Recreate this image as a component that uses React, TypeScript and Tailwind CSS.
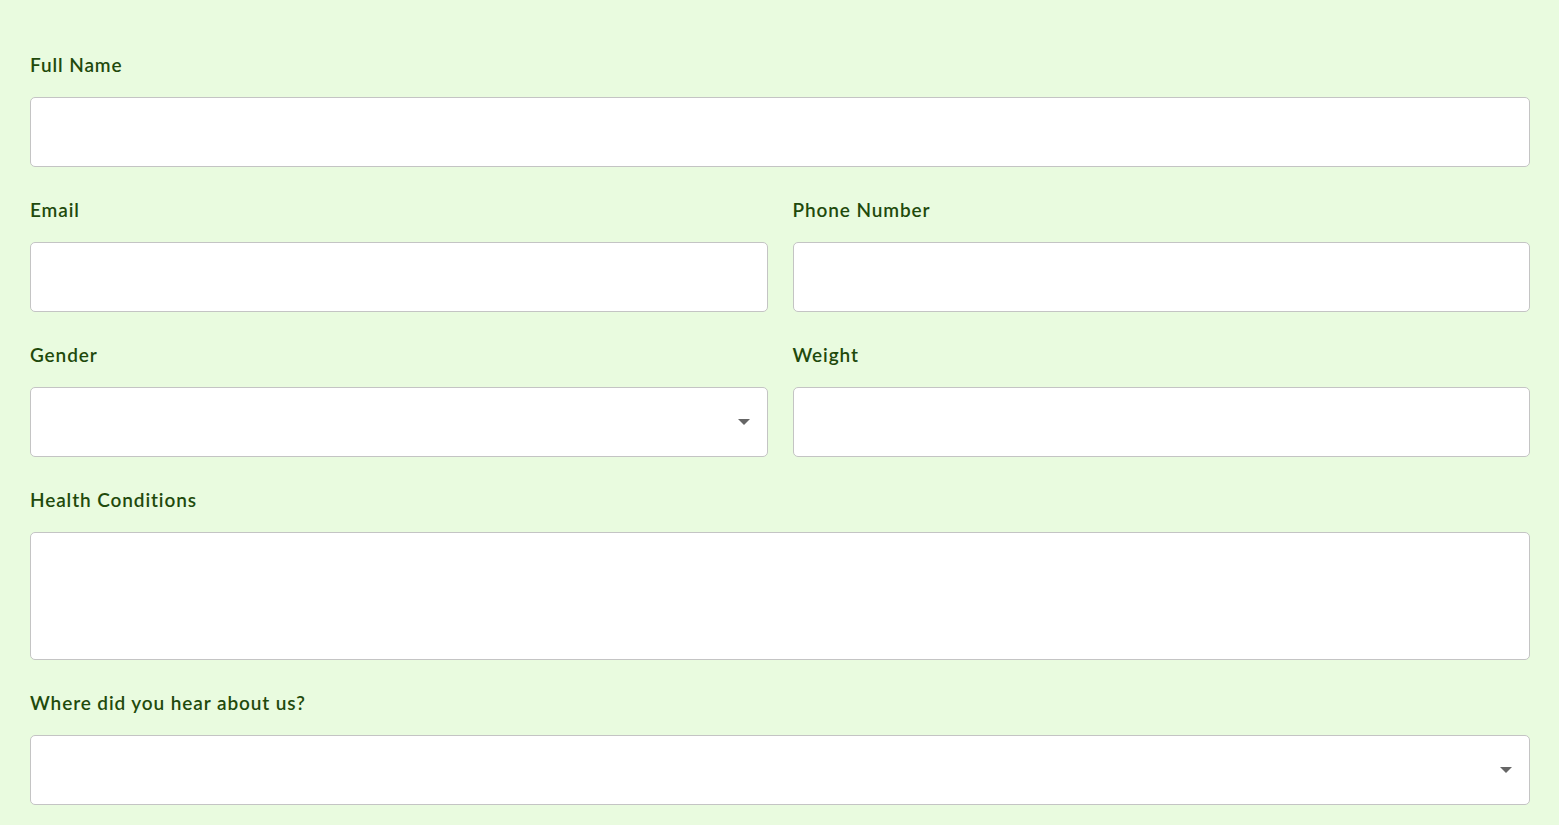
import React from 'react';

const labelCls =
  'block text-[19px] leading-[22px] font-semibold tracking-[0.9px] text-[#1f4a0c] mb-[21px]';
const boxCls =
  'block w-full h-[70px] rounded-[5px] border border-[#c4c4c4] bg-white outline-none';

function Field({ label, children }: { label: string; children: React.ReactNode }) {
  return (
    <div className="min-w-0">
      <label className={labelCls}>{label}</label>
      {children}
    </div>
  );
}

function Select() {
  return (
    <div className="relative">
      <div className={boxCls} />
      <svg
        className="absolute right-[18px] top-1/2 -translate-y-1/2"
        width="12"
        height="6"
        viewBox="0 0 12 6"
      >
        <path d="M0 0 L12 0 L6 6 Z" fill="#666" />
      </svg>
    </div>
  );
}

export default function App() {
  return (
    <div
      className="min-h-screen bg-[#e9fbdf] pl-[30px] pr-[29px] pt-[54px] pb-[20px]"
      style={{ fontFamily: 'Lato, "Noto Sans", sans-serif' }}
    >
      <div className="flex flex-col gap-[32px]">
        <Field label="Full Name">
          <div className={boxCls} />
        </Field>
        <div className="grid grid-cols-2 gap-[25px]">
          <Field label="Email">
            <div className={boxCls} />
          </Field>
          <Field label="Phone Number">
            <div className={boxCls} />
          </Field>
        </div>
        <div className="grid grid-cols-2 gap-[25px]">
          <Field label="Gender">
            <Select />
          </Field>
          <Field label="Weight">
            <div className={boxCls} />
          </Field>
        </div>
        <Field label="Health Conditions">
          <div className={boxCls + ' !h-[128px]'} />
        </Field>
        <Field label="Where did you hear about us?">
          <Select />
        </Field>
      </div>
    </div>
  );
}
